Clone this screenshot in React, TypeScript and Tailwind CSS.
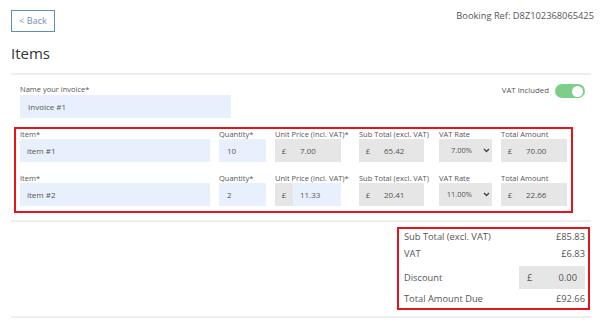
import React from 'react';

const font = { fontFamily: '"Open Sans", "Liberation Sans", sans-serif' };

const Chevron = () => (
  <svg width="7" height="5" viewBox="0 0 7 5" className="text-[#444]">
    <path d="M1 1l2.5 2.5L6 1" stroke="currentColor" strokeWidth="1.4" fill="none" />
  </svg>
);

const Money: React.FC<{ value: string; w: string; editable?: boolean }> = ({ value, w, editable }) => (
  <div className={`flex h-[23px] ${w} text-[8px] text-[#555]`}>
    <div className="w-[18px] bg-[#e6e6e6] flex items-center justify-center">£</div>
    <div className={`flex-1 flex items-center pl-[7px] ${editable ? 'bg-[#e8f0fe]' : 'bg-[#e6e6e6]'}`}>{value}</div>
  </div>
);

const ItemRow: React.FC<{ name: string; qty: string; unit: string; unitEditable?: boolean; sub: string; rate: string; total: string }> = ({
  name, qty, unit, unitEditable, sub, rate, total,
}) => (
  <div className="flex items-end text-[#555]">
    <div className="w-[190px]">
      <p className="text-[7.5px] leading-[10px]">Item*</p>
      <div className="h-[23px] bg-[#e8f0fe] flex items-center pl-[7px] text-[8px]">{name}</div>
    </div>
    <div className="w-[47px] ml-[9px]">
      <p className="text-[7.5px] leading-[10px]">Quantity*</p>
      <div className="h-[23px] bg-[#e8f0fe] flex items-center pl-[8px] text-[8px]">{qty}</div>
    </div>
    <div className="w-[66px] ml-[9px]">
      <p className="text-[7.5px] leading-[10px] whitespace-nowrap">Unit Price (incl. VAT)*</p>
      <Money value={unit} w="w-[66px]" editable={unitEditable} />
    </div>
    <div className="w-[65px] ml-[18px]">
      <p className="text-[7.5px] leading-[10px] whitespace-nowrap">Sub Total (excl. VAT)</p>
      <Money value={sub} w="w-[65px]" />
    </div>
    <div className="w-[53px] ml-[15px]">
      <p className="text-[7.5px] leading-[10px] whitespace-nowrap">VAT Rate</p>
      <div className="h-[23px] bg-[#e6e6e6] flex items-center justify-end pr-[2px] text-[7.5px] gap-[11px]">
        <span>{rate}</span>
        <Chevron />
      </div>
    </div>
    <div className="w-[66px] ml-[9px]">
      <p className="text-[7.5px] leading-[10px] whitespace-nowrap">Total Amount</p>
      <Money value={total} w="w-[66px]" />
    </div>
  </div>
);

export default function App() {
  return (
    <div className="w-[602px] h-[328px] bg-white overflow-hidden text-[#555]" style={font}>
      <div className="px-[11px] pt-[10px]">
        {/* header */}
        <div className="flex justify-between items-start">
          <button className="w-[44px] h-[22px] border border-[#5b8fc4] text-[#6f8fb0] text-[9px] flex items-center justify-center">
            &lt; Back
          </button>
          <p className="text-[9.3px] leading-[12px] mt-0 -mr-[3px] text-[#555]">Booking Ref: D8Z102368065425</p>
        </div>
        <h2 className="text-[15px] text-[#333] mt-[11px] leading-[20px]">Items</h2>
        <div className="h-[2px] bg-[#eeeeee] mt-[10px]" />

        {/* invoice name + vat toggle */}
        <div className="flex justify-between items-start pl-[9px] pr-[6px] mt-[9px]">
          <div>
            <p className="text-[7.5px] leading-[10px] mb-[1px]">Name your invoice*</p>
            <div className="w-[211px] h-[23px] bg-[#e8f0fe] flex items-center pl-[8px] text-[8px]">Invoice #1</div>
          </div>
          <div className="flex items-center gap-[6px]">
            <span className="text-[7.8px]">VAT Included</span>
            <div className="w-[30px] h-[14px] rounded-full bg-[#7ccf87] flex items-center justify-end pr-[2px]">
              <div className="w-[11px] h-[11px] rounded-full bg-white" />
            </div>
          </div>
        </div>

        {/* items */}
        <div className="ml-[3px] mt-[9px] w-[559px] border-2 border-[#e2141c] px-[4px] pt-0 pb-[5px] flex flex-col gap-[11px]">
          <ItemRow name="item #1" qty="10" unit="7.00" sub="65.42" rate="7.00%" total="70.00" />
          <ItemRow name="item #2" qty="2" unit="11.33" unitEditable sub="20.41" rate="11.00%" total="22.66" />
        </div>

        <div className="h-[2px] bg-[#eeeeee] mt-[7px]" />

        {/* totals */}
        <div className="flex justify-end pr-[1px] mt-[5px]">
          <div className="w-[193px] h-[83px] border-2 border-[#e2141c] pl-[5px] pr-[3px] text-[9.3px] flex flex-col">
            <div className="flex justify-between h-[17px] items-center">
              <span>Sub Total (excl. VAT)</span>
              <span>£85.83</span>
            </div>
            <div className="flex justify-between h-[17px] items-center">
              <span>VAT</span>
              <span>£6.83</span>
            </div>
            <div className="flex justify-between items-center h-[23px] mt-[4px]">
              <span>Discount</span>
              <div className="w-[66px] h-[23px] bg-[#e6e6e6] flex items-center justify-between pl-[8px] pr-[8px]">
                <span>£</span>
                <span>0.00</span>
              </div>
            </div>
            <div className="flex justify-between h-[19px] items-center">
              <span>Total Amount Due</span>
              <span>£92.66</span>
            </div>
          </div>
        </div>

        <div className="h-[2px] bg-[#eeeeee] mt-[6px]" />
      </div>
    </div>
  );
}
